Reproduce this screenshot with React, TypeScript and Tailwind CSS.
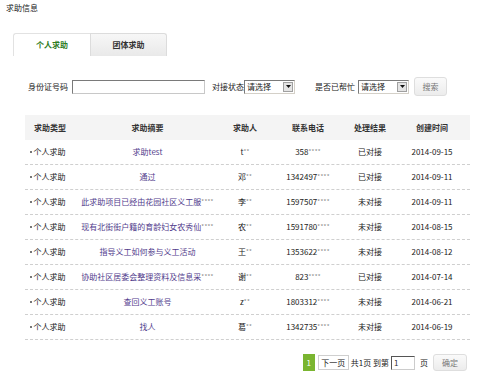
import React from "react";

interface HelpRow {
  type: string;
  summary: string;
  summaryMore?: boolean;
  person: string;
  phone: string;
  result: string;
  date: string;
}

const rows: HelpRow[] = [
  { type: "个人求助", summary: "求助test", person: "t", phone: "358", result: "已对接", date: "2014-09-15" },
  { type: "个人求助", summary: "通过", person: "邓", phone: "1342497", result: "已对接", date: "2014-09-11" },
  { type: "个人求助", summary: "此求助项目已经由花园社区义工服", summaryMore: true, person: "李", phone: "1597507", result: "未对接", date: "2014-09-11" },
  { type: "个人求助", summary: "现有北街街户籍的育龄妇女农秀仙", summaryMore: true, person: "农", phone: "1591780", result: "未对接", date: "2014-08-15" },
  { type: "个人求助", summary: "指导义工如何参与义工活动", person: "王", phone: "1353622", result: "未对接", date: "2014-08-12" },
  { type: "个人求助", summary: "协助社区居委会整理资料及信息采", summaryMore: true, person: "谢", phone: "823", result: "已对接", date: "2014-07-14" },
  { type: "个人求助", summary: "查回义工账号", person: "z", phone: "1803312", result: "未对接", date: "2014-06-21" },
  { type: "个人求助", summary: "找人", person: "葛", phone: "1342735", result: "未对接", date: "2014-06-19" },
];

// masked digits / names are shown as small stars
const Stars: React.FC<{ n: number }> = ({ n }) => (
  <span className="relative -top-[1px] text-[6px] leading-none text-[#888] tracking-[0.3px]">{"*".repeat(n)}</span>
);

const FakeSelect: React.FC<{ width: string }> = ({ width }) => (
  <div
    className={`${width} shrink-0 h-[14px] flex items-center bg-white border border-t-[#7a7a7a] border-l-[#7a7a7a] border-r-[#d4d0c8] border-b-[#d4d0c8]`}
  >
    <span className="flex-1 pl-[2px] text-[8px] leading-none text-[#222] whitespace-nowrap">请选择</span>
    <span className="w-[10px] h-[10px] mr-[1px] flex items-center justify-center bg-[#e4e4e4] border border-[#a0a0a0]">
      <svg width="5" height="3" viewBox="0 0 5 3">
        <path d="M0 0 L5 0 L2.5 3 Z" fill="#111" />
      </svg>
    </span>
  </div>
);

const App: React.FC = () => {
  return (
    <div
      className="w-[500px] h-[378px] bg-white text-[8px] text-[#222] overflow-hidden whitespace-nowrap"
      style={{ fontFamily: '"Noto Sans CJK SC", "Liberation Sans", sans-serif' }}
    >
      <div className="h-[16px] pl-[6px] flex items-center text-[8px] leading-none">求助信息</div>

      {/* tabs */}
      <div className="mt-[17px] ml-[13px] flex h-[23px] w-[154px]">
        <div className="w-[77px] flex items-center justify-center bg-white border-t border-l border-[#e2e2e2] rounded-tl-[3px] font-bold text-[#2f7d1f]">
          个人求助
        </div>
        <div className="w-[77px] flex items-center justify-center bg-gradient-to-b from-[#f7f7f7] to-[#e9e9e9] border-t border-r border-l border-[#dcdcdc] rounded-tr-[3px] font-bold text-[#333]">
          团体求助
        </div>
      </div>

      {/* search */}
      <div className="mt-[21px] h-[19px] flex items-center pl-[28px]">
        <span className="w-[44px] shrink-0">身份证号码</span>
        <div className="w-[133px] shrink-0 h-[14px] bg-white border border-t-[#7a7a7a] border-l-[#7a7a7a] border-r-[#c8c8c8] border-b-[#c8c8c8]" />
        <span className="ml-[7px] w-[32px] shrink-0">对接状态</span>
        <FakeSelect width="w-[51px]" />
        <span className="ml-[20px] w-[43px] shrink-0">是否已帮忙</span>
        <FakeSelect width="w-[51px]" />
        <button className="ml-[5px] w-[33px] h-[19px] shrink-0 rounded-[3px] border border-[#dedede] bg-gradient-to-b from-[#fafafa] to-[#ececec] text-[8px] text-[#777]">
          搜索
        </button>
      </div>

      {/* table */}
      <div className="mt-[19px] ml-[25px] w-[445px]">
        <div className="h-[25px] flex items-center bg-[#f4f4f4] font-bold text-[#333]">
          <div className="w-[50px] text-center">求助类型</div>
          <div className="w-[145px] text-center">求助摘要</div>
          <div className="w-[50px] text-center">求助人</div>
          <div className="w-[76px] text-center">联系电话</div>
          <div className="w-[48px] text-center">处理结果</div>
          <div className="w-[76px] text-center">创建时间</div>
        </div>
        {rows.map((r, i) => (
          <div key={i} className="h-[25px] flex items-center border-b border-dashed border-[#cfcfcf]">
            <div className="w-[50px] pl-[5px] flex items-center">
              <span className="w-[1.5px] h-[1.5px] bg-[#777] mr-[2px]" />
              {r.type}
            </div>
            <div className="w-[145px] text-center text-[#523c8c]">
              {r.summary}
              {r.summaryMore && <Stars n={4} />}
            </div>
            <div className="w-[50px] text-center">
              {r.person}
              <Stars n={2} />
            </div>
            <div className="w-[76px] text-center">
              {r.phone}
              <Stars n={4} />
            </div>
            <div className="w-[48px] text-center">{r.result}</div>
            <div className="w-[76px] text-center">{r.date}</div>
          </div>
        ))}
      </div>

      {/* pagination */}
      <div className="mt-[13px] flex items-center justify-end pr-[33px] h-[19px]">
        <span className="w-[12px] h-[17px] flex items-center justify-center bg-[#7ab530] text-white">1</span>
        <span className="ml-[3px] w-[31px] h-[15px] flex items-center justify-center border border-[#cfcfcf] bg-white">下一页</span>
        <span className="ml-[2px]">共1页 到第</span>
        <div className="ml-[2px] w-[24px] h-[14px] flex items-center pl-[2px] bg-white border border-t-[#555] border-l-[#555] border-r-[#ccc] border-b-[#ccc] text-[#333]">
          1
        </div>
        <span className="ml-[5px]">页</span>
        <button className="ml-[5px] w-[34px] h-[17px] rounded-[3px] border border-[#dedede] bg-gradient-to-b from-[#fafafa] to-[#ececec] text-[8px] text-[#777]">
          确定
        </button>
      </div>
    </div>
  );
};

export default App;
